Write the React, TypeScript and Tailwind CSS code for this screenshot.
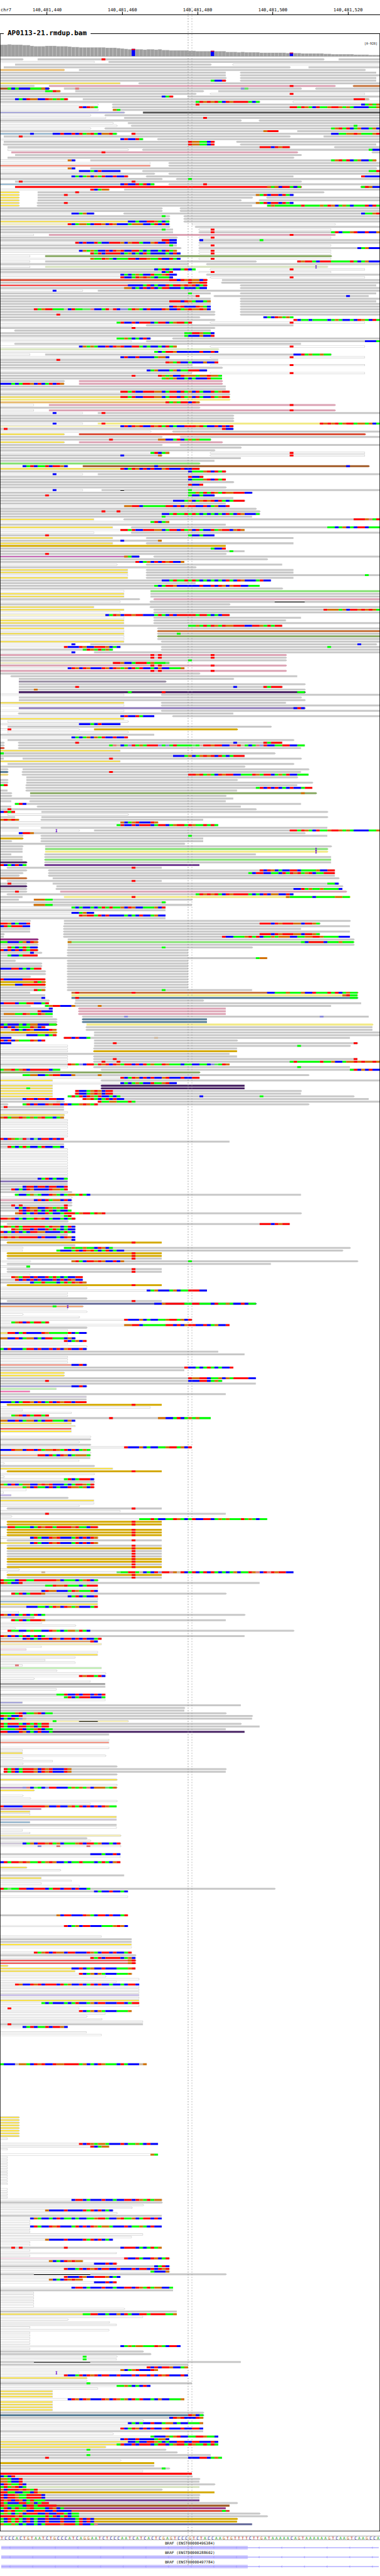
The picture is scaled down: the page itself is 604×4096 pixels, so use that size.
import React from "react";

/*
 * Pileup notation, one row of packed reads per line:
 *   g10>86   read drawn in colour g over bases 10..86; ">" or "<" is the strand arrow, "-" a plain end
 *   @27CAT   mismatching bases from base 27 on (lower case: low base quality)
 *   ~73-81   deletion      !84   insertion      .   blank row      3* …   row repeated
 */
const BLOCKS: [number, string][] = [
  [0, `
g0>6 g10>86 @27T g90-101
W0>25 g29<101
g4>56 W62<101
g1>77 g82-101
o0>17 g21>97
g0-60 g64<100
g0-60 g64<101
g0>60 g64<100
g0>60 @56ACCT g64<100
Y0-32 g37<101`],
  [10, `
g0>9 p13>89 @77T c94<101
n0>13 @2ACACCCAAAGC g17>80 @20t @64ca g84<101
g0>16 @12AATG g20>54 g58-101
g0>52 W56<97 @77T
g0>46 @43CAT g50<101
g0>18 @4CACTGGCCTGAGAT g22>98 @94TTTg
g0>69 @52ATGTGTACTGTTTTACA W78<101
W0>26 g30<101 @52T @96CAGAG
W0>26 @21TCTGA g30<101 @77TTATGACTAAGTTGAGACCCCAAG
W0>26 g30-101 @30GA
L0>33 k38-101
W0>24 g28<101
W0>28 g33-101 @54T
g0>64 g69<101
W0>30 g34-101
W0>31 g35<101 @94A
W0>24 g28<101 @88AGTATCAGCCAGC
g0-74 @70GTTT g79-101
S0>31 @8C @14CCTCCTCTAGTACGGTA g35<101 @35T @88CCAAGGTGAAAGT
g1>77 @5T g86-101
W0>38 @32CTCCTA g42<101
g1>57 @50TGGAACT g63<101
g1<57 @50TGGAACT g64<100
g2>77 @69TTTCTGTT g89<101
W2>34 g38<101 @98ACC
p3>79 @27T g99<101
g4>80
g2>78
W0>20 @18GC g24>100 @88AGTATCAGCCAG
W0-40 g45<101
N0-40 g45<101
W0-20 @18GC g24>100
W0>32 @21CCCACTCCCCC g38<101 @98AAT
g0>41 g45<101
W0>34 @19CACAGCGATCCTCCT g39<78 @96TCCCC
g0>43 g47<101 @50A
g4>80 @5T @35T
S0>41 @32CTCCTATCA g45<101 @54T
r4>80 @71GAGCTTACA v96<101 @96ATGCC
W0>29 @24TCAGG g33-101
Y0>5 g10>86 @20T
Y0>5 g10>78 @17T @68GATCTTCTAC
Y0>5 g10>67 g71<101
Y0>5 g10>64 g69<101
Y0>5 g10<78 @17T @68GATCTTCTAC
Y0>5 g10<67 g71-101 @71AGAAAAAAATAAAAGATGCAGACAAATCTA
2* g0>43 g48<101
W0>25 @19CCAGCC g33<101 @96CAAGT
g0>45 @43A g49<101
g0>45 g49<101
Y0>45 @34CCACCTTGACA g49<101
J0>45 @18TCAGGACTTGCTGCCCAGGGCCATCTC W51>89
g0>45 g52<101
g0-46 @43A W53<88 @56T
g0-46 g53<101 @56T @88ATCAAGTCCTCCG
W0-9 p13>89 @77T
g0>47 W53<88 @56T
g0-47 @43TTCC g53<101 @53C @69A
W0-47 @20TCTCCTACCTTTGCGTTACCGTCCTCC g53<101
g0-47 @45A W53<88 @56T
g0>48 g53<101 @95CAGCCC
W0>47 @21CGAGACCTCTGTCCTTACACCACTAG W53<88 @56T
W0-48 @24TATCTTTTCAGCACTACCCCACTC W53<88 @56T
W0-8 v12>88
W0-48 @24GAATGACAAATTCTTGAATCCTAC W53<88 @56T
W0-8 g12>68 g79-101 @79TGTTACTTTAAAAATACAGCCC
g0>50 g55<101
W0-8 s12>87 !84
g0-52 @41CATCACCATCA W56<97 @77T
g0-46 @43CAT W53<88 @56T
W0>47 @32CACAGACCTAAGTCC g55<101
W0-46 @32TCCATGTGACAAAC W56<97 @77T
t0>55 @45TTCTGTGGCT g59-101
g0>55 @50TGGTT g59<101
R0>55 @34CCCCATCACCTATTGTGTCAT g64<100
g0-55 @33GGCACTCTCATTCCCACCCACC g64<101
W0-22 @14C g26-101
g0-56 @50A g64<100
g0>53 @52T g57<98 @92C
g0-56 g64<101
g0-56 @45TTTCTGACCAG g64<100
g0-56 g64<101
g0-56 @45CTGTCCCTGAC g64<101
g0-56 @9TAGTTAAAgCTAAaatCCATgTCccATGACTCCCTGCCTAGTGGTGC g64<101
g0>57 g64<101
g0>57 @15T g64<101
g0>53 @70CACTGAGA
g0>57 @78TCAACAAAACAGACCACTGACTA
W0>51 @31ATCCTCTTTCATTCAGTTAT W56<97 @77T
W0>35 g39<78
g0>57 @35T`],
  [102, `
g4<56
g0-57 @49AATTGAAC
g0-57 @49ACCCGCCT
W0>40 @31AAGACACTC g46<101
W0-35 g39<101 @97CCCA
g4<80
W0-47 @21CGAGACCTCTGTCCTTACACCACTAG W56<97 @77T
s0>58
W0>58 @41ACATTGCCCCCCTCCTC
W0-8 g12>88 @78CCTAGAAGAA
W0>45 @32CTCCTCCCCAGGC W56<97 @77T
g0-58 @15T
g0-58 @44TGATCCACCCGCCT
g0>51 W56<97 @77T
g0>59
W0>55 @39CAGCCCAGCAATTTCC
g0-51 W56<97 @77T
g0-59 @35T @42TGAGCCTGGGAGGTGGA
g0-59 @43AGAGCCACACCCTAAA
g0>17 p21>59
g0>17 @0CCCACATTGCTCATCTG p21>59
2* g0-60
W0>61 @32TTATCCTTTGGCATTCTAGCTACCTAGTT
g0>61
Y0>61 @32TTATCCTTTGGCATTCTAGCTACCTAGTT
y0>61
o0>53 @44TAGATTCTG
W0-9 p13>89 @77T
g0>53
W0-9 p13>89 @77T
W0-22 @14C g26-101 @27T
3* g0>62
W0-22 @14C y26-101 @27T @85TGTGTAGTTAGGAGCA
J0>62 @32CTCTGTCCTGTATCACCTTTGTACCTCTCT
g0>62 @1T @59TCC
W0>40 g46<101
Y0>17 t21>97
g0>43 g48<101
g0>56 @29T @42GGCCATCAGAGAAA
Y0>17 p21>59
g0>43 g48<101
g0>64
g0>57
W0>45 @40ATCAG W56<97 @77T
g0>43 @32C @42G W56<97 @77T
g0-64
g0-57
l0>53
W0>18 @6CATCAATCTTGC n22>98 @41C @92C
Y0>53 @32TCATGCTCTCCGTCCCTCCTT
g0>60 @50CAAAGTCTAT
W0-22 @14C g26-101
g0>54 @50TCCT
g0-60 @50CAAAGTCTAT
g0>62
g0-54 @50TCCT
g0>60
W0-22 @14C g27-101 @50A ~32-33
g0>67 @50AAGATATGATGGTTTCC
g0>57 @12T @50ACCACCC
g0-62
g0>65 @46CCCAGCAGTGTCTACATTT
g0-60
W0>61 @33GGTTCAAAAAATTCTCGTTCCTCAGCCT
g0>68
g0>69 @27T @31T
g0>69 @43CCATAATATACACACACTACTGCCCA
g0-67 @43A
Y0-25 g33<101 @94TTTGtAT
W0-45 @40ATCAG
g0-60
Y0-30 g35<101 @87AACAGCACTTCAAA
W0-65 @32TTATCCTTTGGCATTCTAGCTACCTAGTTCGTG
W0-25 g35<101
g0-57 @12T @50ACCACCC
Y0-30 g39<78
g0-43 @32C @42G
Y0-30 g39<78
d0-60
g0-60 @56ACCT
g0-65 @61A
g0>60 @12T
H0>37 @33GACC g41<101
g0>71
g0-49 @36TCAGCTCTGTCCG
W0>31 g39<75
g0>52
2* Y0-34 g39<78
W0-34 g39<101 @97A`],
  [195, `
Y0-34 g39<78
g0-72 @43CCATAATATACACACACTACTGCCCATCC
g0-52
g0-69 @41ACATTGCCCCCCTCCTCTGCGTTCCAAA
g0>75
W0-33 l40-101
2* Y0-33 g40-101
g0>37 p41<101
W0-32 g40<101 ~73-81
g0>61
Y0-25 g40<101
Y0-33 g41<101 @86TGGGAGCTTGTGTGA
W0-32 g41<101
J0>61 @28CATGCTTGTTCCCATACTCTTTTTATTACACTT
W0-33 g41<80
Y0-33 g41<76
Y0-33 g41<101
g0-75 @50AAGATATGATGGTTTCCTTGATATT
Y0-33 g42<101
W0-33 c42<101
Y0-33 g42<101 @47A
W0-33 v42<101
W0-33 g42<101
Y0-33 g43<101
W0>20 @19C g24>100 @95C
W0>32 @17TCCCTGCCTTTGCAC g43<101 @87A
g0-30 @22ATGATAGA g43<101
W0-20 @19C g25-101
p0>76 @40T @42T @56T
g0>76 @40T @42T @56T
g0>76 @50A
J0>45 @30TTGCCATTTAGAAAa
p0>76 @40T @42T @56T
W0>49 @18CTGCTGCCCTGCTGAGCTATCCACGCCAAAG
p0>76 @40T @42T @56T
g0>53
g3<79
g5>62
f5>44
g5>81
g5>75 @20T @62C @70TATTT
g5>81 @9G
u5>81 @34A @43T @79AA
W0-33 g43<101
g5>80
g5>81
Y0-33 g43<76
W0-33 g43<101
e5>81 @78CTC
W0-33 g43<101
g5<62
W0-41 @32CTCCTACCC g46<101
Y0-33
W2>34
W0-32 @21CCCACTCCCCC
g2>72
W0>21 @2T d25>63
W2>34
g0-41
W0-34 @19CACAGCGATCCTCCT
g2>78
g0>1 g5<75 @20T @62C @70TATTT
g0>1 g5<81 @29AtgCAcTAGATTTcAcATAAAAaAgTTGTTCCttTgACAtcTCCAATTCCAA
t0>1 g5<80
Y0-32
g0>73 @0A
g0-65 @46CCCAGCAGTGTCTACATTT
g0-1 g6>80 @29T
Y0-32
g2>78
g0>65
g0>2 g6>82
b0>2 g6<80 @29T
a0>2 g6<82 @50TTGTAGACTGTTCCAAATGATTCAGATCCAAA
g7>79
g0>2 g7>63
g0>2 g7>83
g0>2 @0AT g7<79
g7<83 @68ATCTCTCACTCCATT
g0-2 g7<63
g0>3 v8>84 @80G
g0>3 g8>60
g0-62
g0-3 g8<60
g4<80 @4ATC
g0-3 g10<64
g0>68 @2T
g0-4 @0CTAT g11>87
W2>34
g0-4 g11>87
g0>5 @0GTGTG g11<54
W0>42 @32GCAGTCCCTG`],
  [288, `
W0-58 @31ATCCTCTTTCATTCAGTTATGAATATA
g0-5 g11<87
W0>21 !15 g25-101 @77TTATGACTAAGTTGAGACCCCAAG
g5>81 @5CTTG
g0>6 g11<87 @50A
d0>6 g11<54
g0>3 g11<54
g0>49
g0>6 g12>88
g0-6 l12>87 !84
g0-6 y12>87 !84
g0-3 g12<68
g0-6 g12<88
g0-6 l12<88
u0>7 g12<88
g0>7 @0TCACTCA q12<53
g2<43 @35T
g0>7 g13<89 @69TCTGCACCTTCAAAAGCCTT
g0>6 g13<89 @66ACTTCCAACTATGTAGTCAATTT
g0>5 g13<89
c0>7 g14>90
g2<43 @35T
g0>7 @2T g14>90 @87AAC
u0>7 g15>91
g0>7 g15<91 @78CCTAGAAGAAAAC
g0>7 @4T p16>92
g2<78 @52ATGTGTACTGTTTTACACTCGGCCTC
g0-6 y17>93 @35T @76GAAAAAACAAAAAGGAA
g0-5 g9>51 @9GGGAA
g0>44 @43A
g9<51 @9GGGAA
W0-44 @19ACACCACATATAAGCTGCCAAAGCT
g0-44
W0-25 @19CCAGCC
W0-44 @21TGTTATCTCCCCACACTCCAGCC
g0-44
g0>8 g17>93
g0-8 @0TTGCACCT g17>85 @69TTTCTGTTTGGCTTGA
g0-8 @0CTATTTCC g17<93
g0-8 g17<80
g0-8 g17<93
g0>1 g17<85 @69TTTCTGTTTGGCTTGA
g0-1 g17<93 @59TCCAAAGTATCAAGAGGGCCAAGGTTGAAAACCC
m0>10 g18>94
t0>10 @0AACCCAGCTG l18>94 @18G @80ACTTTTCAAAGAAA
g0>10 g18>94
g0>10 @2TACATACC g18>67 @43A
v0>10 @0TCTCTCTATT g18<50
g0>11 @8C g18<50
g0-10 @2ACCATTTT g18<50
g0-71 @68AGG
g0>4 g18<50
2* g0>11 g18<50
g0-11 @0CCCTTCACATT g18<50
2* g0>12 g18<50
g0>8 g18<50
g0>12 @0TCCCCCTTTTTT g18<50
d0>12 @9TAG g18<50
d0>12 @4CCTTTTTT g18<50
g0>12 g18<50
g0>12 @9TAG g18<67 @43A
g0-8 c19>95 @20T @35T @71CCAAAGAAAGCCTAAATATCAGAA
g0-12 y19>95 @91GTAA
g0-12 @11C b19>95 @20T @93AA
g0>13 g20>54
g0-13 @0CTTTCAATTCCAT g20<96
g0>8 g12<88 @12AGTTCCCG @26G
g0-14 @13C p21<60
g0-14 @10TCCC p21<60
g0-14 @1GGGAATGAATGAA p21<60
g0-14 g22<98 @33c @85c
2* g0>15 b22<55
n0>15 @0CACCCACAGGCCCAA y23>99
g0>12 @0TCTCGAAATGCT g23<99
g0>15 @3TCACTGCCCCTG g23<99
d0>15 g25-101
g0>15 @7CCCAACAT g25-101
g0>3 @0CCC g17<93 @17TTCTCCA @41g
g0-12 @0TCTCGAAATGCT g25>63
g0-3 @0CCC g25>95 @30T @94T
W0-18 g25>93 @79A
W0-18 g25<63
W0-18 d25<63
g0-61
W0-18 g25<63
W0-18 g25<95 @30T @94T
W0-18 g25<101 @27T @31T @77ATAAAAAATAAGCCAGGTGTGGTG
g0-61 @18TGAcCTTaTGTCTGATTCTCTAGAATGAAACAACCAACcaATG
W0-18 g25<93 @79A
g0-16 @0AGGTAGTCTTTTTCAA g27<101 @93ATCGCTCC`],
  [381, `
v0>53
g6>82 @6AAGGCCAGTTCCCG @26G
W0>53 @32TCATGCTCTCCGTCCCTCCTT
Y0-14 g27<101
W0-47 @32CACAGACCTAAGTCC
Y0-14 u27<65
Y0-14 @7A u27<65
Y0-14 g20>80 @20TCCAGTGCTT
Y0-14 g20<80 @20TCCAGTGCTT
Y0-14 g18>94 @18ATATCTGATCCACA @53C @69A
g0>17 @6CTTCTTCTTCC g22<98 @22TGTACATCTCC
g0>17 @15g g26-101 @26TAAGGAAATA
g0>2 g6>82 @6ATCTCCTGTTCTCAAGTGAT
g0-17 @1T
g0-17
W0-18
Y0>17
g0-17 @0GTAGGTGAGAGTAACAG
7* W0-18
g0-17 @0TCTGAaTcCaCTTCTCT
g0-61
g0-17
g0-17 @2TACATACCATCCAAC
11* W0-18
g0-18 @10CATCACCA
e0-18
g0-18
g0-18 @6CTTCTTCTTCCT
g0-18 @3TCACTGCCCCTGGAT
g0>19
g4<80 @4ACCAGaACCTGACAGGATAC
W0>19
p0>19 @9CTCTAGGCTC
g0>19
g0>19 @3T @5T @17T
g0-18 @4CACTGGCCTGAGAT
g0-19 @5TCTGTACATCACCA
g4>80 @4GTCACTCCTACCATTTAGTTATGT
g0-19 @17AT
g0>20 @0TTGTCACAATGTCACCACAT
g0>18
g2<77 @69TTTCTGTT
y0>20 @0ATGATATTTTTTATGGCATC
W0>20 @3TGATTCTCCTATACACC
g0-20 @0TCACTCACTTGGCCCCATAC
g0-18
g0-20 @0GTGTGTTTTTCTCCCACTGC
g0-20 @19C
d2<43 @35T
g0-20
W0>6 g17>93 @17AAGAAGAACTGCA
W0-6 g15>91 @15ACCCATCTGTACATCACC
2* d2<43 @35T
g2<43 @35T
W0>8 g19>95 @19GTACTTGTGCCTCG @50A
g2<72
W0-8 @7A
2* g2<43 @35T
W0-8
W0-22 @3TGATTCTCCTATACACCTT
g0-22 @4TCTCTCTCCCTCTCTGCC
g0-23 @8CAATAAACATATGTG
d2<43 @35T
W0>23
W0-55 @39CAGCCCAGCAATTTCC
2* W0-18
g0>23
g2<43 @35T
i0>68 @41CCGTTTTTAATTAAACTAAGACCTCAA
Z0>22 @14A !18
W0-18
W0>23
W0>6
W0>21`],
  [474, `
W0>51 @33TCCCGCACCAAGTTAGCT
W0>13 @3AGTCTATTAT
W0-61 @33GGTTCAAAAAATTCTCGTTCCTCAGCCT
g0>23
W0-18
Y0>23 @2TTCATCCCCTGAAAAATCACC
W0-18
g0>20 @0GGCCTCAGGCACTTAAACGC
W0>23 @17TCAGCT
W0-18
W0>23
g0>23 @0ACTCCCATTCTCCTCTCGTCCTC
g0-58
g0-65
3* W0-18
N0>23 @19CCTC
g0-62 @49TCCACATACACCT
g0-49
2* Y0>17
g0-68 @50TGGTTCAAGCGATTTTCC
g0>59 @12T @50CCCTTCAGA
g0-68
L0>23 @19CCTC
M0-15
P0-8
g0-60
V0-23
g0-23
g0-23 @0CCCACATTGCTCATCTGTTCTTT
d2<43 @35T
W0-40
W0-6
W0-19
W0-13 @3AGTCTATTAT
g0-56 @29T @42GGCCATCAGAGAAA
g0-20 @0GGCCTCAGGCACTTAAACGC
Y0-19
J0-20
R0-19
Y0-19
.
W0>24
g0>24
W0>21
g0>24
W0-51 @33TCCCGCACCAAGTTAGCT
g0>24 @0CCCTGGCTTCTAGGTGATCTCAGA
W0>24
O0>24 @10TTCTACTGCAGGGA
g0-24
W0-21
W0>1
g0>25
Y0-30
d2<43 @35T
W0>25
W0>1
W0>25 @17ATCATTTC
g0>25
g0>25 @0GACTCAGGCCGTGTCCCACATTGAT
O0>25 @6AGCTAACTCACCTGGAGCT
W0-7
W0-1
Q0-3
g0>18
Y0-25
W0-25
W0>21
g2<43 @35T
W0-32
g0-60 @12T
W0>3
W0-71 @37AAATACCAATGACATCCTTCAGAGAAATAGACAA
2* d2<43 @35T
S0>26 @2TTAAAACATGTTATTTTGTAACTT
3* d2<43 @35T
W0>26 @8CTACCTGTCCCATCTCTG
g2<43 @35T
Y0>26 @8CTACCTGTCCCATCTCTG
g2<43 @35T
d2<43 @35T
3* g2<43 @35T
2* d2<43 @35T
g2<43 @35T`],
  [567, `
d2<43 @35T
W0>5
W2<78 @11g @31aAATTAgCACTcTTtGgTCATCATCTACACAGCAATGtCTtTGTTCC
d2<43 @35T
g2<43 @35T
p0>26 @0TAAACTTAATTTTTTGCAAACAGTCA
g0-69 @0TGACCT
g0-26 @12AATGGTAAACATTT
W0-26
g0-26 @11CTGGCCCATGAAATC
g3>60 @3TATCATTTG
g0-26 @18CATCACCT
W0-26
S0-26
Y0-26
g0-26 @7CCCAACATGCTGAGCCCAT
.
W0-5
g0>65 @0TGCTCATCATCA
g0>9
g3<60 @3TATCATTTG
W0>11
W0>20
W0>4
g2>78 @2TAACCAGAACCTGACAGGaTAC
W0>6
g0-65 @0TGCTCATCATCA
g0-27 @6CTCACTTCTGCTTCTCTCCAT
X0-26 @24TC
B0-27
W0-11
F0-7
W0-26
Y0-26
W0-20
W0-12
W0-20
W0-6 @4t
M0-27
W0>15
W0>28
W0>28 @21TGTTATC
W0>9
W0-24
D0-28
g0-28
W0-15
.
g0-28 @15AATCCTCTTCTCT
W0-28 @17ATCATTTCCCA
W0-28
L0-6
g0-64
g0>49
g0-49
g0>60 @0AAAAGTCAAGTCAA
g0>67 @0TGACCT
g0-67 @0CACTAcg
B0>34 @14A ~21-26
g0>64 @0TATTTACTATATT
g0-69 @0TACCCTTAGCATT
g0-60 @0AAAAGTCAAGTCAA
u0-65 @0TTCCCTGCACTCCA
g0-29
.
W0-29
N0-29
.
W0-29
W0-6
Y0-6
W0>28
W0>6
W0-14
W0>6
g0>31
g1>60 @1TATCATTTGCTGTCCCTG
g1<60 @1TATCATTTGCTGTCCCTG
g0>31
.
Y0>31
.
W0>31
E0>31 @6ctCaACcTTCCCAGAGAtCGGGaAG
Y0>9
.
W0>6
W0>8
W0>31
W0-24
g0-31 @0TCCCCCTTTTTTGCCTCCGTATCTCTCTGAA
H0-11
Y0-8`],
  [660, `
W0-8
Y0-31
V0-31
S0-8
g0-31
W0-31
W0-6
W0-8
B0>32
g0>23
W0>24
V0>32 @6CAGCTTGTAGCAAAGTCTTAGCCACT
W0>32 @10c @15t @23t
2* .
g0-32 @24CCCACCTC
W0-32
.
g0-32 @0CTATTGTGAATAGTGCCACAATAAACATACGT
.
Y0>7
W0>16
.
g0-33
Y0-11
W0-19
W0-11
W0>21
g0>73 @0TAaAATTCCTTTCATTCTTCTCCA
g0-34 @25CACCTCCAC
.
W0-34
6* .
g0-34 @15GCTTCCCTGACTTCTCCAT
3* .
W0-34 @17TCAGCTTCCCAAAGTGC
3* .
W0-27
2* g0-35
Y0-35
W0-35
.
W0-35 @9TAGTCTGGCTTCCCTGACTTCTCCAT
g0>36
W0>36 @24TATCTTTTCAGC
2* R0>36 @34GT
Y0>2
Y0-36 @19CCTCAGCCTCCCAAAGT
Y0-20
W0>35 @21TCAGCGACCCAAAG
W0>28
W0-37
W0-31
W0-37 @4TGCCTGTCTTTCTAGCCTCATCTCCACCACTTC
3* W0-37
Q0-37
W0-37
Y0-37
W0-37 @11ACACCCACATCCAGCTTCCCTTCATT
W0-37
W0-21 @2T
W0-35 @21TCAGCGACCCAAAG
W0-28
W0>23
W0>27
W0-38
g0-38 @2T
W0-18 @6CATCAATCTTGC
.
W0-23
W0-27
10* .
g0-39 @0ACCCgGGACTGTCCTGGTTTTAGCACTGAAACTACCCgG`],
  [774, `
8* Y0>5
W0-2
.
W0-42 @21TCTGAGGACCCTCAAGACTCC
W0-29 @24TCAGG
W0-2
.
W0-42 @40GA
11* W0-2
.
4* W0-2
W0>43 @19CTTCACCCTCCACCTTCTGATAGG
g0>43
W0>38
W0>35
W0>30 @12GCCCCTCCCCTATCTCAC
W0>31
g0-43
W0-43 @8CGACCACTCAACACCAAGTTACCGTAAGCATTCTC
2* W0-8
W0-43 @8CTACCTGTCCCATCTCTGAGGACCCTCAAGACTCC
2* W0-8
W0-38
W0-35
W0-30 @12GCCCCTCCCCTATCTCAC
2* W0-8
g0-43 @3T @5T @17T @32CTTTCACATAG
W0-8
W0-31
W0-8
F0>45 @33TCCTACCTGCAT
W0>22 @13GCACTGTGG
W0>31 @25CCCTCT
g0>45 @41CATC
W0>45 @17TCCATCTGTCTTCCTCCCTCTTCTCTGT
W0>45 @40ACCCG
g0>60 ~9-24
W0-32 @17TCCCTGCCTTTGCAC
W0-22 @13GCACTGTGG
W0-31 @25CCCTCT
.
W0-46 @19CTTCACCCTCCACCTTCTGATAGGCCA
g0-46
6* W0-9
W0>33
g0-47
Y0-47 @22AATTCCACCGCTACCTTATTTTAAG
W0-38
W0>18
W0>29
W0-31`],
  [853, `
W0-8
W0-29
5* W0-8
W0-48 @32CAGAGGAAATGACTTC
W0-8
g0>38
g0>40
W0>31 @22A
W0-31 @22A
g0-64 ~9-24
g0-50
W0-50 @39TCTCTTGCCAG
W0-42 @32GCAGTCCCTG
W0-21 !15
W0-50 @17TCCATCTGTCTTCCTCCCTCTTCTCTGTCCCTC
Y0>23
W0>23
g0-51 @23A
W0-40 @31AAGACACTC
W0-26
3* Y0-14
W0-49 @18CTGCTGCCCTGCTGAGCTATCCACGCCAAAG
4* Y0-14
g0>54
b0>54 @50TGCA
g0>54 @45CTGTCCCTG
W0>38
W0-54 @34CACACCTCCAGGCACCAAAG
W0-38
W0-54 @32TCATGCTCTCCGTCCCTCCTTC
g0-54
W0>30
W0-58 @40ACCCGAGTCCAATTGAAC
W0-45 @32CTCCTCCCCAGGC
Y0-58 @34CCACCTTGACACCTTCCTTCCCTC
Y0-58 @31ATCCTCTTTCATTCAGTTATGAATATA
Y0>28
g0>44 @23A
g0>47
g0-56 @23A
g0-59 @12T @50CCCTTCAGA
W0>32
d0-41
g0-41
g0>45 @43A
W0-38
r0-51
g0>51 @0CACT
g0>53 @0GGACCT
g0-53 @0GGACCT
g0>57 @0CTGAATC
s0-53 @0ATAGTCA
g0>43 @0GCTTTGTGAT
d0-57 @0TTAACCAACT
g0>53 @0TCTTGAATTTTC
g0-53 @0TCTTGAATTTTC
q0-53 @0TGTCTGCATAAA
g0>63 @0TACCCTTAGCATT
n0-61 @0TGAAAACTTATTTTT`],
  [921, `
m0-60 @0ATCATAAGTAAACTGCA
t0-61 @0CTGTAAGCCTTTCCTCCCC @59A
g0>69 @0AGACAGCTTTCCTCCTTACAA
g0>71 @0TTTTGTAAAAAATATCATCAA
d0>63 @0ACTATACTCACCTCCCTCCCATCTC
d0-63 @0ACTATACTCACCTCCCTCCCATCTC
i0-67 @0GAAGACACCACATTTTGTTTATCCAt`],
];

const GREY = "#c8c8c8";

const SOLID: Record<string, string> = {
  g: GREY, p: "#dca3b4", n: "#a15a26", c: "#c6743e", k: "#555555", o: "#e8bb70",
  y: "#f2ea86", d: "#d4a900", r: "#ff0000", b: "#587e97", v: "#87a862", l: "#82e070",
  s: "#d8e4c0", t: "#d94f38", u: "#4a2565", q: "#713c91", m: "#922f80", e: "#8c79b8",
  f: "#978ca2", i: "#636899", a: "#ead57a",
};

const HOLLOW: Record<string, string> = {
  W: "#ffffff", Y: "#ffe53c", S: "#90b8d4", L: "#a4a4dc", N: "#ff8c78", J: "#fffac4",
  R: "#ff3c3c", H: "#c86cb8", P: "#ff6cb4", M: "#c0ffb0", V: "#d0c8dc", Q: "#c8b8f4",
  O: "#ffb080", X: "#dc965c", F: "#ffe0ee", D: "#8c8c8c", Z: "#ffa060", E: "#ac78cc",
  B: "#fff5b0",
};

const BASE: Record<string, string> = {
  A: "#00ff00", C: "#0000ff", G: "#d17105", T: "#ff0000",
  a: "#64e464", c: "#8c8cdc", g: "#ccb69e", t: "#e07878",
};

const UNIT = 1000 / 101;
const ROW_TOP = 66;
const ROW_PITCH = 7;

const px = (base: number) => Math.round(base * UNIT * 10) / 10;

function shape(x0: number, x1: number, y: number, h: number, dir: string) {
  const mid = h / 2;
  const right = dir === ">" ? `l3,${mid}l-3,${mid}` : `v${h}`;
  const left = dir === "<" ? `l-3,${-mid}l3,${-mid}` : "";
  return `M${x0},${y}H${x1}${right}H${x0}${left}z`;
}

function buildLayers() {
  const reads: Record<string, string> = {};
  const cores: Record<string, string> = {};
  const bases: Record<string, string> = {};
  const gaps: string[] = [];
  const inserts: string[] = [];
  const add = (map: Record<string, string>, color: string, d: string) => {
    map[color] = (map[color] ?? "") + d;
  };

  const drawRow = (row: number, line: string) => {
    const y = ROW_TOP + row * ROW_PITCH;
    for (const token of line.split(" ")) {
      const mism = /^@(\d+)(\w+)$/.exec(token);
      if (mism) {
        const start = Number(mism[1]);
        for (const run of mism[2].matchAll(/(.)\1*/g)) {
          const from = start + (run.index ?? 0);
          const x = px(from);
          add(bases, BASE[run[1]], `M${x},${y}H${px(from + run[0].length)}v5H${x}z`);
        }
        continue;
      }
      const gap = /^~(\d+)-(\d+)$/.exec(token);
      if (gap) {
        const a = px(Number(gap[1]));
        const b = px(Number(gap[2]));
        add(cores, "#ffffff", `M${a},${y}H${b}v5H${a}z`);
        gaps.push(`M${a},${y + 2}H${b}v2H${a}z`);
        continue;
      }
      const ins = /^!(\d+)$/.exec(token);
      if (ins) {
        const x = px(Number(ins[1]));
        inserts.push(`M${x - 2},${y - 1}h4v2h-1v4h1v2h-4v-2h1v-4h-1z`);
        continue;
      }
      const read = /^(\w)(\d+)([<>-])(\d+)$/.exec(token);
      if (!read) continue;
      const [, key, a, dir, b] = read;
      const x0 = px(Number(a));
      const x1 = px(Number(b));
      if (SOLID[key]) {
        add(reads, SOLID[key], shape(x0, x1, y, 5, dir));
      } else {
        add(reads, GREY, shape(x0, x1, y, 5, dir));
        const left = a === "0" ? x0 : x0 + 1;
        const rightEdge = b === "101" ? x1 : x1 - 1;
        add(cores, HOLLOW[key], shape(left, rightEdge, y + 1, 3, dir));
      }
    }
  };

  for (const [start, text] of BLOCKS) {
    let row = start;
    for (const line of text.trim().split("\n")) {
      const rep = /^(\d+)\* (.*)$/.exec(line);
      const times = rep ? Number(rep[1]) : 1;
      for (let n = 0; n < times; n++) drawRow(row++, rep ? rep[2] : line);
    }
  }
  return { reads, cores, bases, gaps: gaps.join(""), inserts: inserts.join("") };
}

const LAYERS = buildLayers();

/* Coverage as [depth, number of bases] runs. */
const DEPTH: [number, number][] = [
  [30, 2], [31, 1], [30, 3], [29, 2], [27, 1], [26, 3], [27, 3], [26, 3], [25, 1], [24, 2],
  [23, 7], [22, 3], [21, 1], [20, 1], [19, 1], [18, 1], [19, 1], [18, 2], [17, 1], [18, 2],
  [17, 1], [18, 1], [16, 2], [15, 5], [14, 2], [13, 4], [14, 1], [13, 3], [11, 3], [10, 1],
  [11, 1], [10, 4], [9, 7], [8, 1], [9, 1], [8, 2], [7, 6], [6, 2], [5, 6], [4, 4], [3, 3],
];

const VARIANTS = [
  { base: 35, depth: 19, alt: 3 },
  { base: 56, depth: 14, alt: 2 },
  { base: 77, depth: 9, alt: 2 },
];

function Coverage() {
  const bars = DEPTH.flatMap(([depth, n]) => Array<number>(n).fill(depth));
  return (
    <g>
      {bars.map((h, i) => (
        <g key={i}>
          <rect x={px(i)} y={60 - h} width={UNIT} height={h} fill="#b0b0b0" />
          <rect x={px(i) + 1} y={61 - h} width={UNIT - 2} height={h - 1} fill="#a0a0a0" />
        </g>
      ))}
      {VARIANTS.map((v) => (
        <g key={v.base}>
          <rect x={px(v.base)} y={60 - v.depth} width={9} height={v.depth} fill="#0000ff" />
          <rect x={px(v.base)} y={60 - v.depth} width={9} height={v.alt} fill="#ff0000" />
        </g>
      ))}
      <rect x={0} y={60} width={1000} height={1} fill="#808080" />
    </g>
  );
}

function Paths({ map }: { map: Record<string, string> }) {
  return (
    <>
      {Object.entries(map).map(([color, d]) => (
        <path key={color} d={d} fill={color} />
      ))}
    </>
  );
}

function Ruler() {
  const marks = ["140,481,440", "140,481,460", "140,481,480", "140,481,500", "140,481,520"];
  return (
    <header className="grid grid-cols-[2.5%_repeat(5,19.8%)] overflow-hidden border-b border-black pt-3 text-[7px] leading-[8px]">
      <span className="pl-px">chr7</span>
      {marks.map((m) => (
        <div key={m} className="flex flex-col items-center">
          <span>{m}</span>
          <span className="-mt-px h-1 w-px bg-black" />
        </div>
      ))}
    </header>
  );
}

function AlignmentTrack() {
  return (
    <section>
      <div className="mt-[23px] flex h-3 items-center gap-1.5">
        <span className="h-px w-1.5 bg-black" />
        <h1 className="text-[11px] leading-3 font-bold">AP0113-21.rmdup.bam</h1>
        <span className="h-px flex-1 bg-black" />
      </div>
      <div className="relative -mt-1.5">
        <span className="absolute top-[13px] right-1 text-[5px] leading-[6px]">[0-928]</span>
        <svg viewBox="0 0 1000 6576" className="block h-auto w-full" role="img" aria-label="Read alignments">
          <Coverage />
          <Paths map={LAYERS.reads} />
          <Paths map={LAYERS.cores} />
          <Paths map={LAYERS.bases} />
          <path d={LAYERS.gaps} fill="#000000" />
          <path d={LAYERS.inserts} fill="#7020d0" />
          <path d="M0,0H1.2V6574.8H998.8V0H1000V6576H0z" fill="#000000" />
        </svg>
      </div>
    </section>
  );
}

const SEQUENCE =
  "TCCCACTGTAATCTGCCCATCAGGAATCTCCCAATCATCACTCGAGTCCCGTCTACCAAGTGTTTTCTTGATAAAAACAGTAAAAAAGTCAAGTCAAGCCA";

const LETTER: Record<string, string> = {
  A: "text-[#009a00]",
  C: "text-[#00008b]",
  G: "text-[#b8650a]",
  T: "text-[#b00000]",
};

function SequenceTrack() {
  return (
    <div className="mt-[7px] grid grid-cols-[repeat(101,minmax(0,1fr))] border-y border-[#aaaaaa] text-center text-[6px] leading-[5px]">
      {SEQUENCE.split("").map((b, i) => (
        <span key={i} className={LETTER[b]}>{b}</span>
      ))}
    </div>
  );
}

function GeneTrack({ name }: { name: string }) {
  const arrows = Array.from({ length: 17 }, (_, i) => 21 + i * 60);
  return (
    <figure>
      <figcaption className="text-center text-[6px] leading-[9px]">{name}</figcaption>
      <svg viewBox="0 0 1000 10" className="block h-1.5 w-full" aria-hidden="true">
        <rect x={0} y={0} width={653} height={10} fill="#d2cdff" />
        <rect x={0} y={4} width={1000} height={2} fill="#a09bff" />
        {arrows.map((x) => (
          <path key={x} d={`M${x},5l3,-3.5v7z`} fill="#a09bff" />
        ))}
      </svg>
    </figure>
  );
}

export default function App() {
  return (
    <main className="relative w-full bg-white pb-3 font-['DejaVu_Sans_Mono',monospace] text-black">
      <Ruler />
      <AlignmentTrack />
      <SequenceTrack />
      <GeneTrack name="BRAF (ENST00000496384)" />
      <GeneTrack name="BRAF (ENST00000288602)" />
      <GeneTrack name="BRAF (ENST00000497784)" />
      <div className="pointer-events-none absolute top-3 bottom-4 left-[49.5%] w-[1%]">
        <svg className="h-full w-full overflow-visible" aria-hidden="true">
          <line x1="0" x2="0" y1="0" y2="100%" stroke="#8c8c8c" strokeWidth="0.8" strokeDasharray="1.9 2.33" />
          <line x1="100%" x2="100%" y1="0" y2="100%" stroke="#8c8c8c" strokeWidth="0.6" strokeDasharray="1.9 2.33" />
        </svg>
      </div>
    </main>
  );
}
